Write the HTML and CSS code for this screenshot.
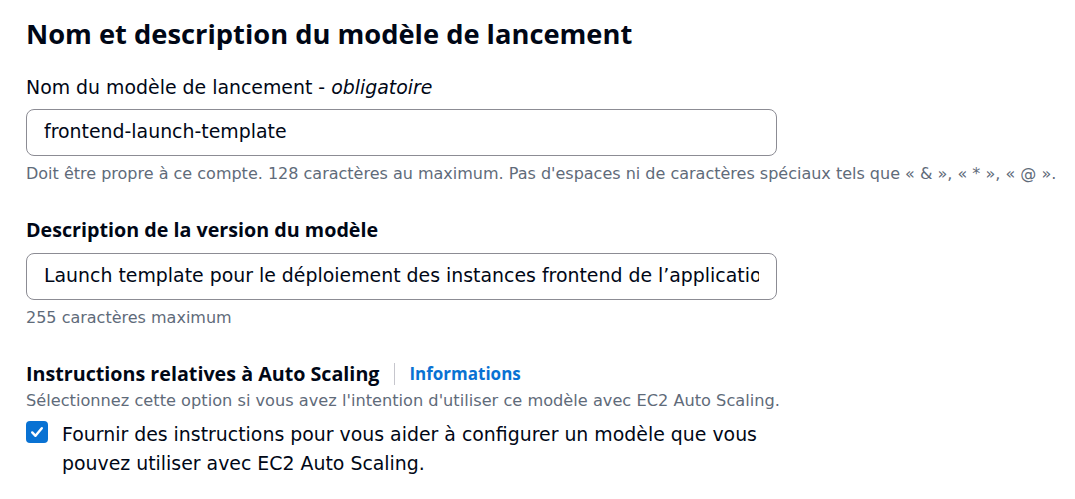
FILE: index.html
```html
<!DOCTYPE html>
<html lang="fr">
<head>
<meta charset="utf-8">
<link rel="stylesheet" href="styles.css">
</head>
<body>
<div class="panel">
  <h2 class="title">Nom et description du modèle de lancement</h2>

  <div class="field">
    <label class="label">Nom du modèle de lancement - <i>obligatoire</i></label>
    <div class="input"><span class="clip">frontend-launch-template</span></div>
    <div class="hint">Doit être propre à ce compte. 128 caractères au maximum. Pas d'espaces ni de caractères spéciaux tels que « &amp; », « * », « @ ».</div>
  </div>

  <div class="field">
    <label class="label bold">Description de la version du modèle</label>
    <div class="input"><span class="clip">Launch template pour le déploiement des instances frontend de l’application</span></div>
    <div class="hint">255 caractères maximum</div>
  </div>

  <div class="field">
    <div class="label-row">
      <span class="label bold">Instructions relatives à Auto Scaling</span>
      <span class="divider"></span>
      <a class="info">Informations</a>
    </div>
    <div class="hint tight">Sélectionnez cette option si vous avez l'intention d'utiliser ce modèle avec EC2 Auto Scaling.</div>
    <div class="check-row">
      <span class="checkbox">
        <svg width="22" height="22" viewBox="0 0 22 22"><path d="M6.2 11.4l3.3 3.4 6.3-7.6" fill="none" stroke="#fff" stroke-width="2.4" stroke-linecap="round" stroke-linejoin="round"/></svg>
      </span>
      <span class="check-text">Fournir des instructions pour vous aider à configurer un modèle que vous pouvez utiliser avec EC2 Auto Scaling.</span>
    </div>
  </div>
</div>
</body>
</html>
```

FILE: styles.css
```css
html, body {
  margin: 0;
  padding: 0;
  background: #ffffff;
}
body {
  font-family: "DejaVu Sans", "Open Sans", sans-serif;
  color: #000716;
}
.panel {
  padding: 16px 0 0 26px;
}
.title {
  margin: 0 0 22px 0;
  font-family: "Open Sans", sans-serif;
  font-size: 27.3px;
  line-height: 36px;
  font-weight: 700;
}
.field {
  margin-bottom: 33px;
}
.label {
  display: block;
  font-size: 18.9px;
  line-height: 26px;
  margin-bottom: 9px;
}
.label.bold {
  font-family: "Open Sans", sans-serif;
  font-weight: 700;
  font-size: 19.7px;
  margin-bottom: 10px;
}
.input {
  width: 751px;
  box-sizing: border-box;
  height: 47px;
  border: 1px solid #8c8c94;
  border-radius: 8px;
  padding: 0 17px 3px 17px;
  font-size: 18.9px;
  line-height: 42px;
}
.clip {
  display: block;
  white-space: nowrap;
  overflow: hidden;
}
.hint {
  font-size: 16px;
  line-height: 20px;
  color: #5f6b7a;
  margin-top: 8px;
  white-space: nowrap;
}
.hint.tight {
  margin-top: 4px;
  font-size: 16.2px;
}
.label-row {
  display: flex;
  align-items: center;
  margin-top: 2px;
}
.label-row .label {
  margin-bottom: 0;
}
.divider {
  width: 1px;
  height: 22px;
  background: #c6c6cd;
  margin: 0 14px 0 15px;
}
.info {
  font-family: "Open Sans", sans-serif;
  color: #0972d3;
  font-weight: 700;
  font-size: 17px;
  line-height: 26px;
}
.check-row {
  display: flex;
  align-items: flex-start;
  margin-top: 9px;
}
.checkbox {
  flex: none;
  width: 22px;
  height: 22px;
  border-radius: 4px;
  background: #0972d3;
  margin-top: 1px;
  margin-right: 14px;
  display: flex;
}
.check-text {
  width: 720px;
  font-size: 18.9px;
  line-height: 29px;
}
```
